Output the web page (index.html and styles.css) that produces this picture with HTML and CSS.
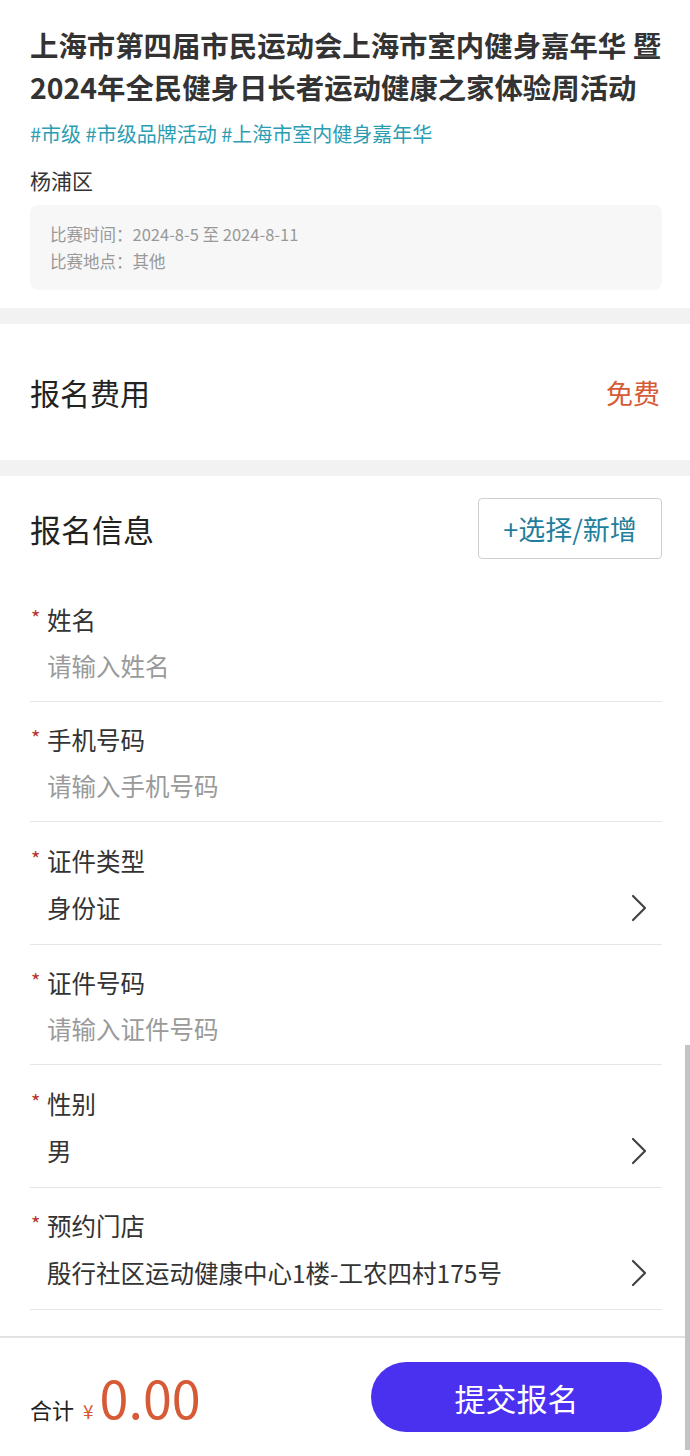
FILE: index.html
```html
<!DOCTYPE html>
<html lang="zh-CN">
<head>
<meta charset="utf-8">
<title>报名</title>
<link rel="stylesheet" href="styles.css">
</head>
<body>
<div class="page">
  <section class="head">
    <h1 class="title"><span class="tl">上海市第四届市民运动会上海市室内健身嘉年华 暨</span><span class="tl">2024年全民健身日长者运动健康之家体验周活动</span></h1>
    <div class="tags">#市级 #市级品牌活动 #上海市室内健身嘉年华</div>
    <div class="district">杨浦区</div>
    <div class="infobox">
      <div class="info-line">比赛时间：2024-8-5 至 2024-8-11</div>
      <div class="info-line">比赛地点：其他</div>
    </div>
  </section>
  <div class="band"></div>
  <section class="fee">
    <span class="fee-label">报名费用</span>
    <span class="fee-value">免费</span>
  </section>
  <div class="band"></div>
  <section class="form">
    <div class="form-head">
      <span class="form-title">报名信息</span>
      <button class="pick">+选择/新增</button>
    </div>
    <div class="field">
      <div class="label"><span class="req">*</span>姓名</div>
      <div class="value placeholder">请输入姓名</div>
    </div>
    <div class="field">
      <div class="label"><span class="req">*</span>手机号码</div>
      <div class="value placeholder">请输入手机号码</div>
    </div>
    <div class="field">
      <div class="label"><span class="req">*</span>证件类型</div>
      <div class="value select"><span>身份证</span><svg class="chev" viewBox="0 0 16 28" width="16" height="28"><polyline points="2,2 14,14 2,26" fill="none" stroke="#444" stroke-width="2.2" stroke-linecap="round" stroke-linejoin="round"/></svg></div>
    </div>
    <div class="field">
      <div class="label"><span class="req">*</span>证件号码</div>
      <div class="value placeholder">请输入证件号码</div>
    </div>
    <div class="field">
      <div class="label"><span class="req">*</span>性别</div>
      <div class="value select"><span>男</span><svg class="chev" viewBox="0 0 16 28" width="16" height="28"><polyline points="2,2 14,14 2,26" fill="none" stroke="#444" stroke-width="2.2" stroke-linecap="round" stroke-linejoin="round"/></svg></div>
    </div>
    <div class="field">
      <div class="label"><span class="req">*</span>预约门店</div>
      <div class="value select"><span>殷行社区运动健康中心1楼-工农四村175号</span><svg class="chev" viewBox="0 0 16 28" width="16" height="28"><polyline points="2,2 14,14 2,26" fill="none" stroke="#444" stroke-width="2.2" stroke-linecap="round" stroke-linejoin="round"/></svg></div>
    </div>
  </section>
  <footer class="bar">
    <div class="total"><span class="total-label">合计</span><span class="yen">¥</span><span class="amount">0.00</span></div>
    <button class="submit">提交报名</button>
  </footer>
  <div class="scrollthumb"></div>
</div>
</body>
</html>
```

FILE: styles.css
```css
* { box-sizing: border-box; }
html, body {
  margin: 0;
  padding: 0;
  background: #fff;
  overflow: hidden;
}
body {
  font-family: "Noto Sans CJK SC", "Noto Sans", sans-serif;
  color: #333;
}
.page {
  position: relative;
  width: 690px;
  height: 1456px;
  overflow: hidden;
}
.head {
  padding: 24px 20px 18px 30px;
}
.title {
  margin: 0;
  font-size: 28.4px;
  line-height: 42px;
  font-weight: 700;
  color: #333;
}
.tl {
  display: block;
  white-space: nowrap;
}
.tags {
  margin-top: 11px;
  font-size: 20px;
  line-height: 30px;
  color: #2a9db3;
}
.district {
  margin-top: 16px;
  font-size: 21px;
  line-height: 30px;
  color: #333;
}
.infobox {
  margin-top: 10px;
  margin-right: 8px;
  height: 85px;
  background: #f7f7f7;
  border-radius: 8px;
  padding: 16px 20px 0 20px;
}
.info-line {
  font-size: 16.5px;
  line-height: 27px;
  color: #999;
}
.band {
  height: 16px;
  background: #f2f2f3;
}
.fee {
  height: 136px;
  padding: 0 30px;
  display: flex;
  align-items: center;
  justify-content: space-between;
}
.fee-label {
  font-size: 30px;
  color: #222;
}
.fee-value {
  font-size: 27px;
  color: #d65a35;
}
.form {
  padding: 22px 28px 0 30px;
}
.form-head {
  display: flex;
  align-items: center;
  justify-content: space-between;
  margin-bottom: 22px;
}
.form-title {
  font-size: 31px;
  color: #222;
}
.pick {
  width: 184px;
  height: 61px;
  background: #fff;
  border: 1px solid #cfcfcf;
  border-radius: 4px;
  font-family: inherit;
  font-size: 27px;
  color: #1f7f9c;
  padding: 0;
}
.field {
  padding: 23.5px 0 20px 0;
  border-bottom: 1px solid #e6e6e6;
}
.label {
  position: relative;
  padding-left: 17px;
  font-size: 24.5px;
  line-height: 30px;
  color: #333;
}
.req {
  position: absolute;
  left: 1px;
  top: -2px;
  font-size: 20px;
  color: #b8322a;
}
.value {
  margin-top: 16px;
  padding-left: 17px;
  font-size: 24.5px;
  line-height: 30px;
  color: #333;
}
.placeholder {
  color: #9a9a9a;
}
.select {
  display: flex;
  align-items: center;
  justify-content: space-between;
  line-height: 32px;
  padding-right: 15px;
}
.chev {
  display: block;
}
.bar {
  position: absolute;
  left: 0;
  right: 0;
  bottom: 0;
  height: 120px;
  border-top: 2px solid #e2e2e2;
  padding: 24px 28px 0 30px;
  display: flex;
  align-items: flex-start;
  justify-content: space-between;
  background: #fff;
}
.total {
  display: flex;
  align-items: baseline;
  margin-top: 5px;
}
.total-label {
  font-size: 22px;
  color: #222;
}
.yen {
  font-size: 19px;
  color: #d65a35;
  margin-left: 9px;
  margin-right: 6px;
}
.amount {
  font-size: 52px;
  line-height: 60px;
  color: #d65a35;
}
.submit {
  width: 291px;
  height: 70px;
  border: none;
  border-radius: 35px;
  background: #4a30ef;
  color: #fff;
  font-family: inherit;
  font-size: 31px;
  padding: 0;
}
.scrollthumb {
  position: absolute;
  right: 0;
  top: 1045px;
  width: 5px;
  height: 405px;
  background: #c4c4c4;
}
```
